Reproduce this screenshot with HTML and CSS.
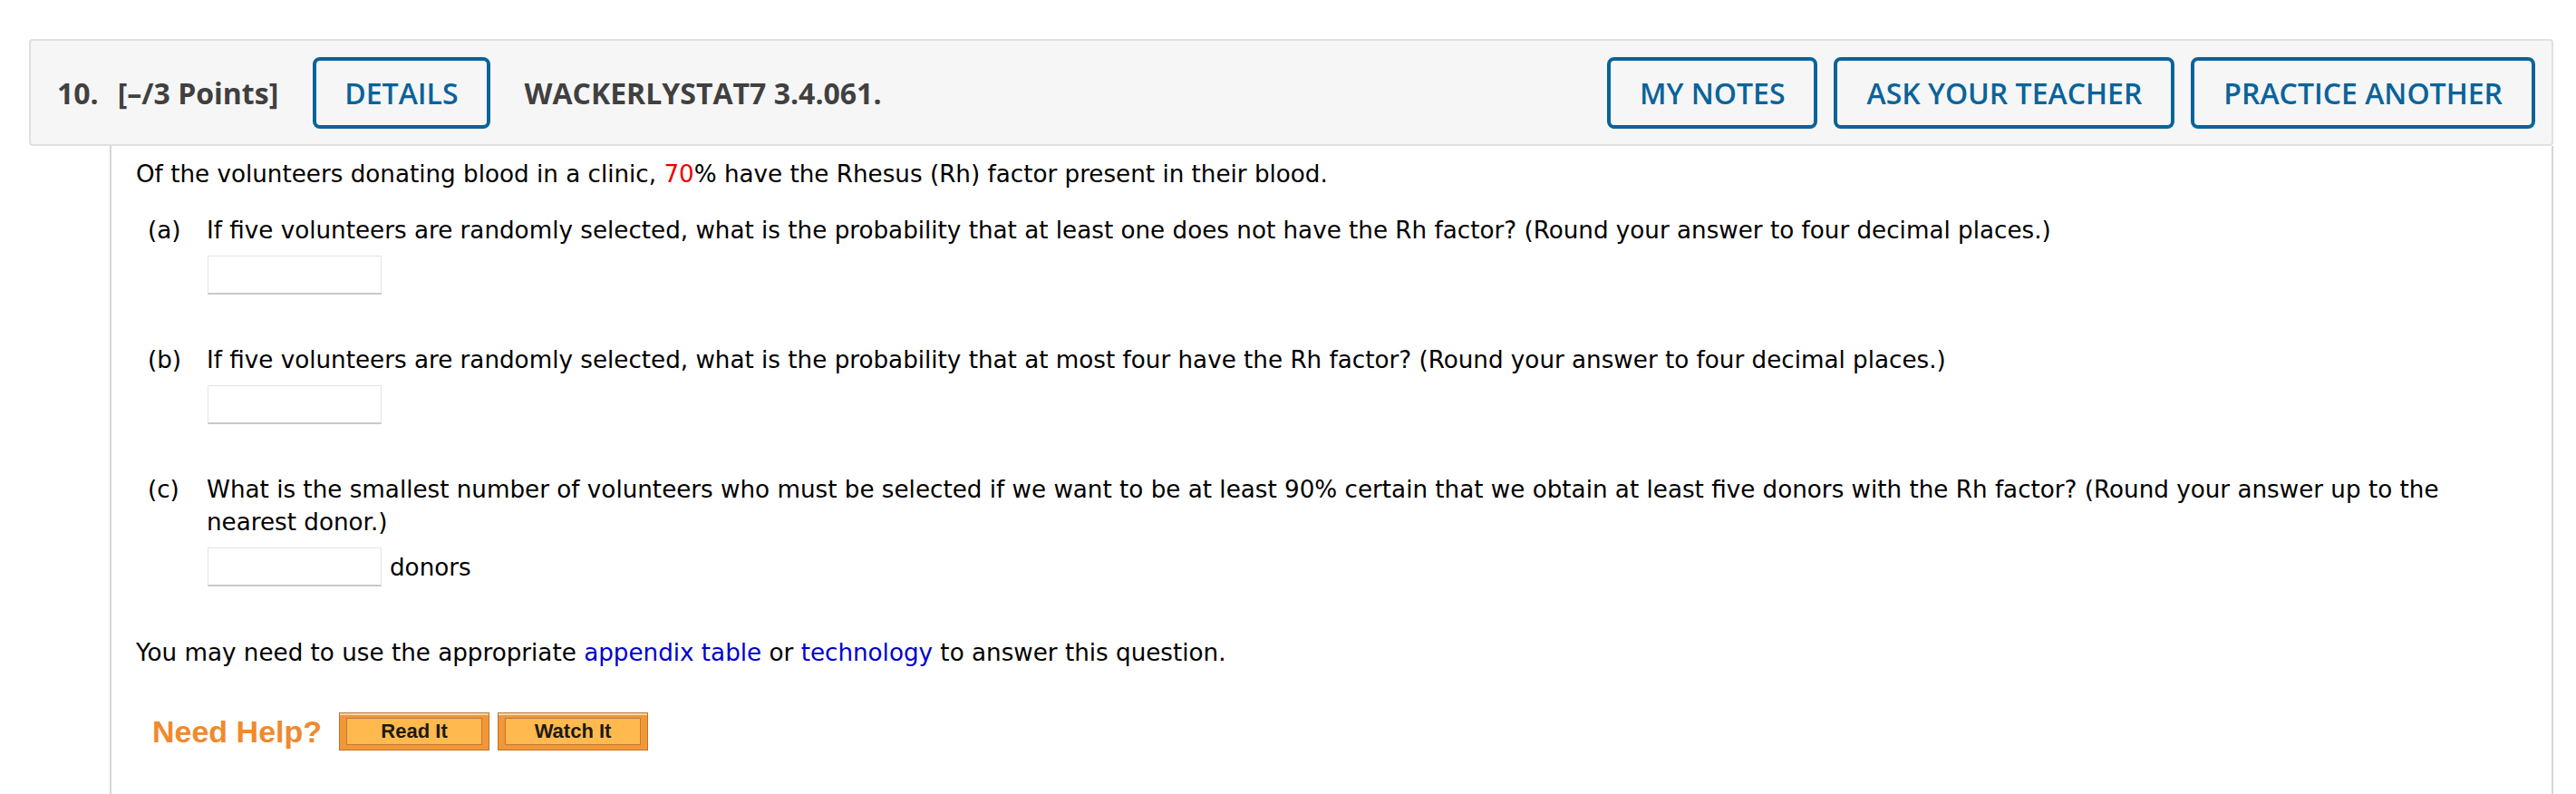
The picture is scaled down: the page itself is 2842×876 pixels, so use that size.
FILE: index.html
```html
<!DOCTYPE html>
<html lang="en">
<head>
<meta charset="utf-8">
<title>Question 10</title>
<link rel="stylesheet" href="styles.css">
</head>
<body>
<div class="page">
  <div class="qhead">
    <span class="qnum">10.</span>
    <span class="qpts">[–/3 Points]</span>
    <button class="hbtn-blue details">DETAILS</button>
    <span class="qid">WACKERLYSTAT7 3.4.061.</span>
    <div class="actions">
      <button class="hbtn-blue">MY NOTES</button>
      <button class="hbtn-blue">ASK YOUR TEACHER</button>
      <button class="hbtn-blue">PRACTICE ANOTHER</button>
    </div>
  </div>
  <div class="qbody">
    <p class="intro">Of the volunteers donating blood in a clinic, <span class="red">70</span>% have the Rhesus (Rh) factor present in their blood.</p>
    <div class="part">
      <span class="plabel">(a)</span>
      <div class="pcontent">
        <p class="ptext">If five volunteers are randomly selected, what is the probability that at least one does not have the Rh factor? (Round your answer to four decimal places.)</p>
        <div class="ansrow"><input type="text" class="ans"></div>
      </div>
    </div>
    <div class="part">
      <span class="plabel">(b)</span>
      <div class="pcontent">
        <p class="ptext">If five volunteers are randomly selected, what is the probability that at most four have the Rh factor? (Round your answer to four decimal places.)</p>
        <div class="ansrow"><input type="text" class="ans"></div>
      </div>
    </div>
    <div class="part">
      <span class="plabel">(c)</span>
      <div class="pcontent">
        <p class="ptext">What is the smallest number of volunteers who must be selected if we want to be at least 90% certain that we obtain at least five donors with the Rh factor? (Round your answer up to the nearest donor.)</p>
        <div class="ansrow"><input type="text" class="ans"><span class="unit">donors</span></div>
      </div>
    </div>
    <p class="note">You may need to use the appropriate <a class="lnk" href="#">appendix table</a> or <a class="lnk" href="#">technology</a> to answer this question.</p>
    <div class="help">
      <span class="needhelp">Need Help?</span>
      <span class="obtn"><span class="obtn-in">Read It</span></span>
      <span class="obtn"><span class="obtn-in">Watch It</span></span>
    </div>
  </div>
</div>
</body>
</html>
```

FILE: styles.css
```css
html, body {
  margin: 0;
  padding: 0;
  background: #ffffff;
}

.page {
  padding: 43px 25px 0 32px;
}

.qhead {
  display: flex;
  align-items: center;
  height: 118px;
  box-sizing: border-box;
  background: #f6f6f6;
  border: 2px solid #e0e0e0;
  border-radius: 4px;
  padding: 0 18px 0 29px;
  font-family: "Open Sans", "DejaVu Sans", sans-serif;
}

.qnum,
.qpts,
.qid {
  font-weight: 700;
  font-size: 32px;
  color: #404040;
  white-space: nowrap;
}

.qnum {
  margin-right: 21px;
}

.hbtn-blue {
  height: 79px;
  box-sizing: border-box;
  border: 4px solid #0a6399;
  border-radius: 8px;
  background: transparent;
  color: #0a6399;
  font-family: "Open Sans", "DejaVu Sans", sans-serif;
  font-weight: 600;
  font-size: 32px;
  padding: 0 32px;
  margin: 0;
  white-space: nowrap;
  display: flex;
  align-items: center;
}

.details {
  margin-left: 38px;
  padding: 0 31px;
}

.qid {
  margin-left: 38px;
}

.actions {
  margin-left: auto;
  display: flex;
  gap: 18px;
}

.qbody {
  margin-left: 89px;
  border-left: 2px solid #d6d6d6;
  border-right: 2px solid #d6d6d6;
  padding: 13px 70px 0 27px;
  min-height: 720px;
  font-family: "DejaVu Sans", Verdana, sans-serif;
  font-size: 26.2px;
  line-height: 36px;
  color: #000000;
}

.intro {
  margin: 0;
}

.red {
  color: #ee0000;
}

.part {
  display: flex;
  margin-top: 54px;
}

.intro + .part {
  margin-top: 26px;
}

.plabel {
  flex: none;
  width: 65px;
  padding-left: 13px;
}

.pcontent {
  flex: 1;
}

.ptext {
  margin: 0;
}

.ansrow {
  display: flex;
  align-items: center;
  margin-top: 10px;
  height: 43px;
}

.ans {
  -webkit-appearance: none;
  appearance: none;
  display: block;
  width: 192px;
  height: 43px;
  box-sizing: border-box;
  margin: 0 0 0 1px;
  padding: 0;
  background: #ffffff;
  border: 1px solid #e4e4e4;
  border-bottom: 2px solid #c9c9c9;
  border-radius: 0;
}

.unit {
  margin-left: 9px;
}

.note {
  margin: 55px 0 0;
}

.lnk {
  color: #0000cc;
  text-decoration: none;
}

.help {
  display: flex;
  align-items: center;
  gap: 9px;
  margin-top: 48px;
  padding-left: 18px;
}

.needhelp {
  font-family: "Liberation Sans", Arial, sans-serif;
  font-weight: 700;
  font-size: 34px;
  line-height: 42px;
  color: #ef8a2d;
  margin-right: 10px;
}

.obtn {
  display: flex;
  width: 166px;
  height: 42px;
  box-sizing: border-box;
  border: 1px solid #b8742f;
  background: #f39635;
  padding: 5px 7px;
  box-shadow: inset 0 2px 0 #ffd9a6;
}

.obtn-in {
  flex: 1;
  display: flex;
  align-items: center;
  justify-content: center;
  border: 1px solid #bf7b36;
  background: #ffb94f;
  font-family: "Liberation Sans", Arial, sans-serif;
  font-weight: 700;
  font-size: 22px;
  color: #1d1a12;
}
```
